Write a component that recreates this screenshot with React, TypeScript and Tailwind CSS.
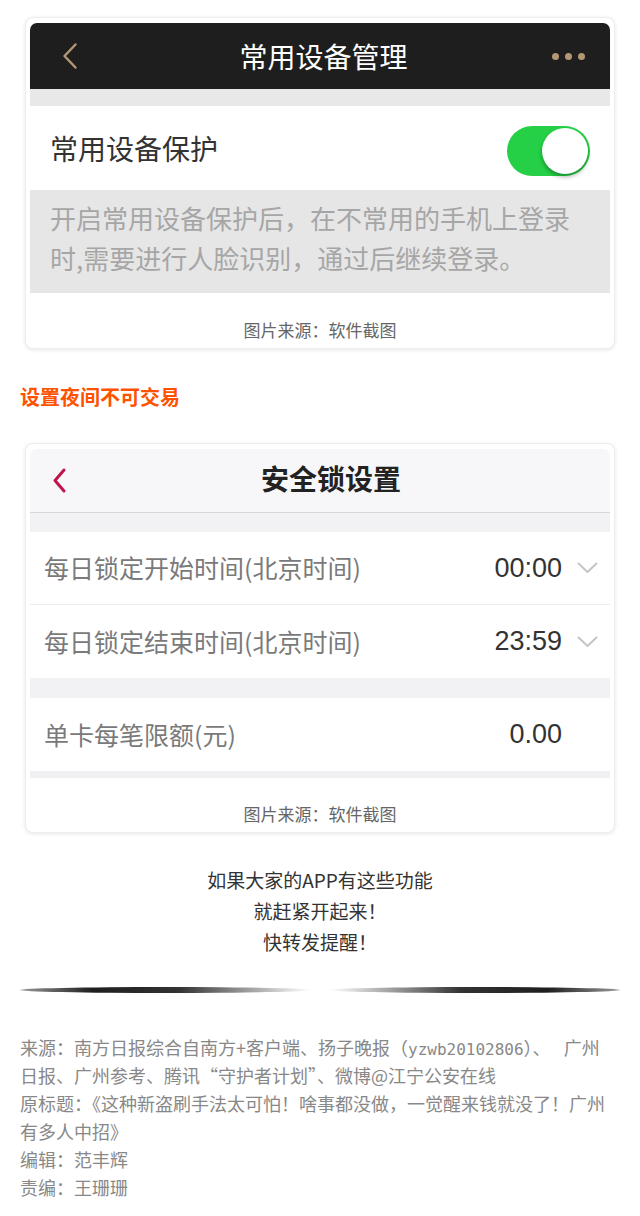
import React from 'react';

const cjk = { fontFamily: '"Noto Sans CJK SC", "Noto Sans", sans-serif' };
const num = { fontFamily: '"Liberation Sans", Arial, sans-serif' };

function BackArrow({ color, w, h, sw }: { color: string; w: number; h: number; sw: number }) {
  return (
    <svg width={w} height={h} viewBox={`0 0 ${w} ${h}`} fill="none">
      <path d={`M${w - sw} ${sw} L${sw} ${h / 2} L${w - sw} ${h - sw}`} stroke={color} strokeWidth={sw} strokeLinecap="round" strokeLinejoin="round" />
    </svg>
  );
}

function Down() {
  return (
    <svg width="21" height="12" viewBox="0 0 21 12" fill="none">
      <path d="M1.5 1.5 L10.5 10 L19.5 1.5" stroke="#c4c4c4" strokeWidth="2" strokeLinecap="round" strokeLinejoin="round" />
    </svg>
  );
}

function Caption() {
  return <div className="text-center text-[17px] leading-[24px] text-[#666]">图片来源：软件截图</div>;
}

function LockRow({ label, value, arrow = true, last = false }: { label: string; value: string; arrow?: boolean; last?: boolean }) {
  return (
    <div className={`flex h-[73px] items-center justify-between bg-white pl-[14px] ${arrow ? 'pr-[12px]' : 'pr-[48px]'} ${last ? '' : 'border-b border-[#ececec]'}`}>
      <span className="text-[25px] text-[#7a7a7a]">{label}</span>
      <div className="flex items-center gap-[15px]">
        <span className="text-[27px] text-[#333]" style={num}>{value}</span>
        {arrow && <Down />}
      </div>
    </div>
  );
}

export default function App() {
  return (
    <div className="w-[640px] bg-white pb-[20px] pt-[17px]" style={cjk}>
      {/* 常用设备管理 截图 */}
      <div className="mx-[25px] rounded-[8px] border border-[#eeeeee] bg-white px-[4px] pt-[5px] shadow-[0_1px_4px_rgba(0,0,0,0.10)]">
        <div className="grid h-[66px] grid-cols-[1fr_auto_1fr] items-center rounded-t-[7px] bg-[#1e1e1e] px-[32px] pr-[25px]">
          <BackArrow color="#b39774" w={16} h={28} sw={2.5} />
          <span className="text-[28px] text-white">常用设备管理</span>
          <div className="flex justify-end gap-[6px]">
            <span className="h-[7px] w-[7px] rounded-full bg-[#b39774]" />
            <span className="h-[7px] w-[7px] rounded-full bg-[#b39774]" />
            <span className="h-[7px] w-[7px] rounded-full bg-[#b39774]" />
          </div>
        </div>
        <div className="h-[17px] bg-[#e8e8e8]" />
        <div className="flex h-[84px] items-center justify-between bg-white px-[20px]">
          <span className="text-[28px] text-[#333]">常用设备保护</span>
          <div className="mt-[6px] flex h-[50px] w-[83px] items-center justify-end rounded-full bg-[#25d046] pr-[2px]">
            <div className="h-[46px] w-[46px] rounded-full bg-white shadow-[0_3px_4px_rgba(0,0,0,0.3)]" />
          </div>
        </div>
        <div className="h-[103px] bg-[#e6e6e6] px-[20px] pt-[8px] text-[26px] leading-[40px] text-[#a6a6a6]">
          开启常用设备保护后，在不常用的手机上登录时,需要进行人脸识别，通过后继续登录。
        </div>
        <div className="pb-[6px] pt-[25px]">
          <Caption />
        </div>
      </div>

      <div className="mt-[34px] px-5 text-[20px] font-bold leading-[28px] text-[#ff5200]">设置夜间不可交易</div>

      {/* 安全锁设置 截图 */}
      <div className="mx-[25px] mt-[32px] rounded-[8px] border border-[#eeeeee] bg-white px-[4px] pt-[5px] shadow-[0_1px_4px_rgba(0,0,0,0.10)]">
        <div className="grid h-[64px] grid-cols-[1fr_auto_1fr] items-center rounded-t-[7px] border-b border-[#d6d6da] bg-[#f7f7f9] pl-[22px]">
          <BackArrow color="#c2134a" w={15} h={27} sw={3} />
          <span className="mb-[6px] text-[28px] font-bold text-[#222]">安全锁设置</span>
          <span />
        </div>
        <div className="h-[19px] bg-[#f2f2f4]" />
        <LockRow label="每日锁定开始时间(北京时间)" value="00:00" />
        <LockRow label="每日锁定结束时间(北京时间)" value="23:59" last />
        <div className="h-[20px] bg-[#f2f2f4]" />
        <LockRow label="单卡每笔限额(元)" value="0.00" arrow={false} last />
        <div className="h-[7px] bg-[#f0f0f2]" />
        <div className="pb-[6px] pt-[24px]">
          <Caption />
        </div>
      </div>

      <div className="mt-[31px] text-center text-[19px] leading-[31px] text-[#333]">
        <p>如果大家的APP有这些功能</p>
        <p>就赶紧开起来！</p>
        <p>快转发提醒！</p>
      </div>

      {/* 分隔阴影 */}
      <div className="mx-5 mt-[30px] flex h-[10px] items-start gap-[20px]">
        <div className="h-[6px] flex-1 rounded-[50%] bg-[linear-gradient(to_right,#9a9a9a,#1e1e1e_25%,#333_55%,rgba(255,255,255,0))] blur-[0.7px]" />
        <div className="h-[6px] flex-1 rounded-[50%] bg-[linear-gradient(to_left,#9a9a9a,#1e1e1e_25%,#333_55%,rgba(255,255,255,0))] blur-[0.7px]" />
      </div>

      <div className="mt-[36px] px-5 text-[18px] leading-[28px] text-[#888]">
        <p>
          来源：南方日报综合自南方+客户端、扬子晚报（<span className="text-[16px] leading-none" style={{ fontFamily: '"DejaVu Sans Mono", monospace' }}>yzwb20102806</span>）、　 广州
          <br />
          日报、广州参考、腾讯“守护者计划”、微博@江宁公安在线
        </p>
        <p>原标题：《这种新盗刷手法太可怕！啥事都没做，一觉醒来钱就没了！广州有多人中招》</p>
        <p>编辑：范丰辉</p>
        <p>责编：王珊珊</p>
      </div>
    </div>
  );
}
